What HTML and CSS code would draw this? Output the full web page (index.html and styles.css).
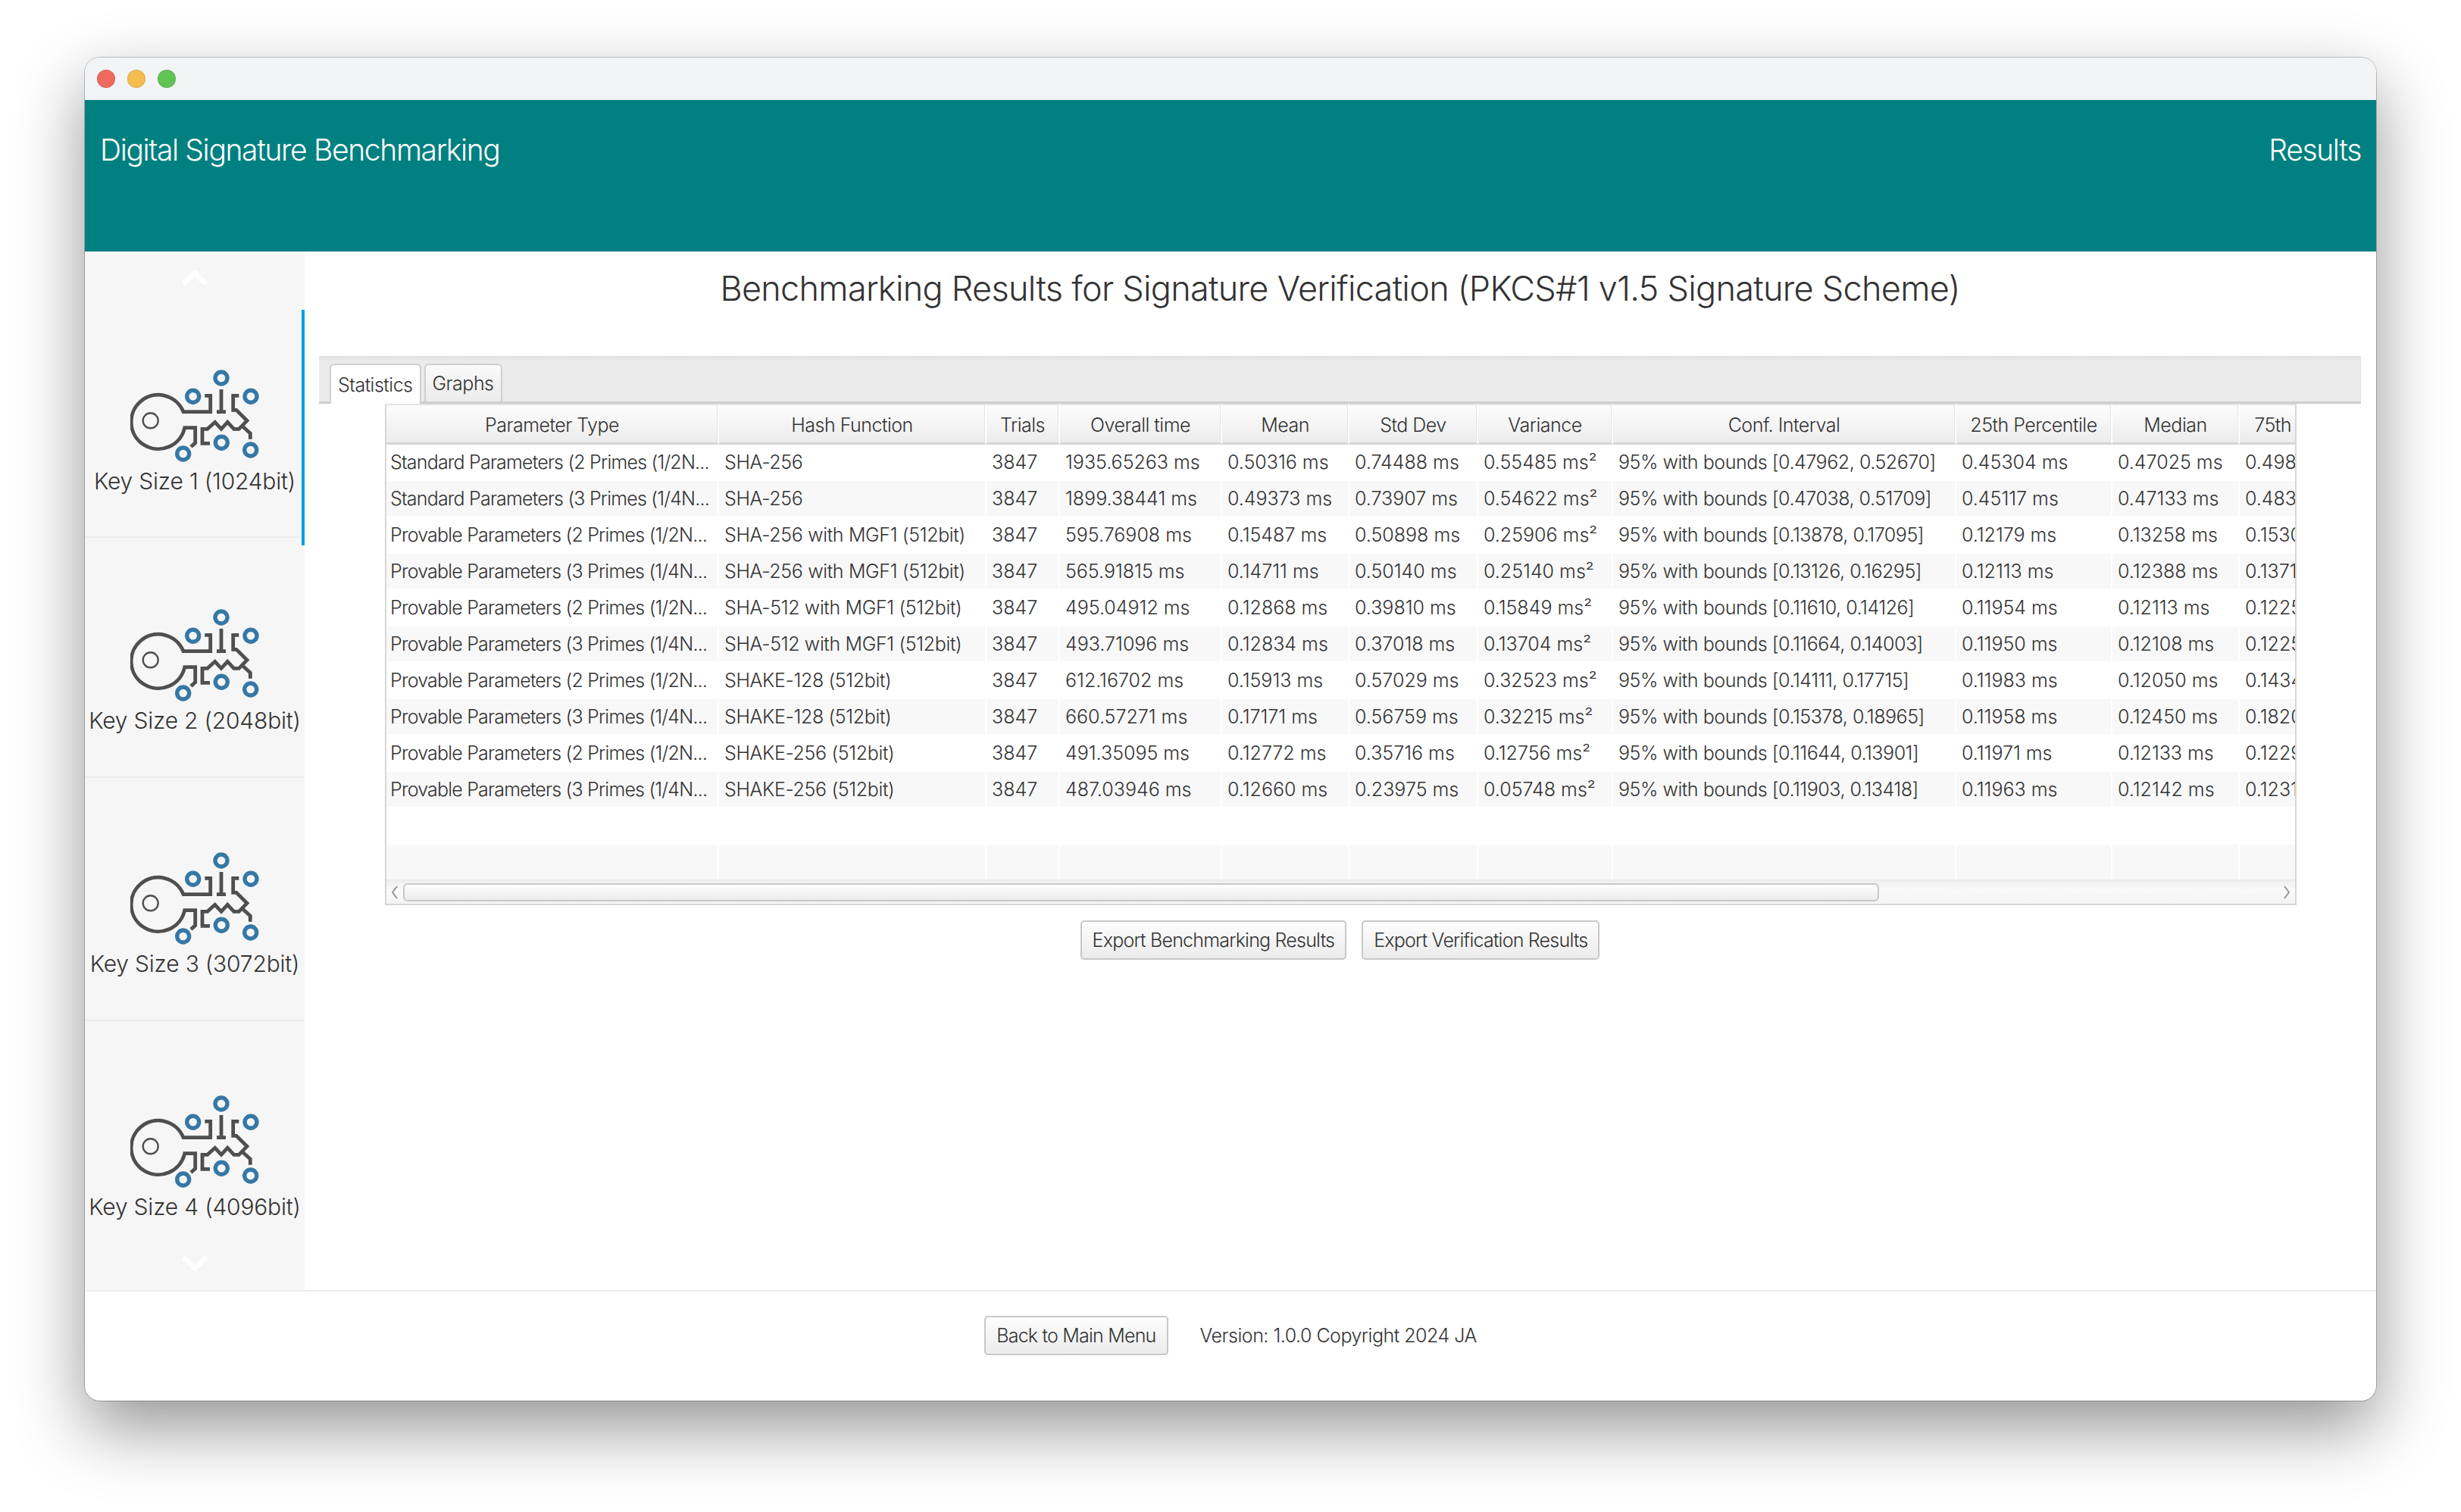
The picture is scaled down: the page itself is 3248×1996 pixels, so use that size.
FILE: index.html
```html
<!DOCTYPE html>
<html lang="en">
  <head>
    <meta charset="UTF-8" />
    <title>Digital Signature Benchmarking</title>
    <link rel="stylesheet" href="styles.css">
  </head>
  <body>
    <svg class="defs" width="0" height="0">
      <symbol id="keyIcon" viewBox="0 0 170 122">
        <g fill="none" stroke="#4f4f4f" stroke-width="4.8">
          <path d="M98.3 34.3H105.7V55.7H70A35.7 35.7 0 1 0 71.7 76.7H85.7V96.7L80 101.7" />
          <path d="M120 26V55.7M114 55.7H126" />
          <path d="M143.3 34.3H135.7V53.3H140L154 67.3L143.3 78.3H136.7L128.3 69.3L120 78.3L111.7 69.3L101.7 78.3H95V97.3H105" />
          <path d="M148.3 75L158.3 84V91.7" />
          <circle cx="26.7" cy="67.3" r="10" stroke-width="2.4" />
        </g>
        <g fill="none" stroke="#3578a6" stroke-width="5.4">
          <circle cx="120" cy="11" r="8" />
          <circle cx="82.7" cy="35.3" r="8" />
          <circle cx="159" cy="35.3" r="8" />
          <circle cx="120.3" cy="96.3" r="8" />
          <circle cx="158.7" cy="106" r="8" />
          <circle cx="69.7" cy="111" r="8" />
        </g>
      </symbol>
    </svg>

    <div class="vindue">
      <div class="titelbar">
        <span class="prik rod"></span>
        <span class="prik gul"></span>
        <span class="prik gron"></span>
      </div>

      <header class="topbar">
        <span>Digital Signature Benchmarking</span>
        <span>Results</span>
      </header>

      <div class="midte">
        <nav class="sidebar">
          <div class="valgtLinje"></div>
          <svg class="pil" viewBox="0 0 34 20"><path d="M4 16L17 4L30 16" /></svg>
          <div class="nogle nogle1">
            <svg class="nogleIkon"><use href="#keyIcon" /></svg>
            <p>Key Size 1 (1024bit)</p>
          </div>
          <div class="nogle nogle2">
            <svg class="nogleIkon"><use href="#keyIcon" /></svg>
            <p>Key Size 2 (2048bit)</p>
          </div>
          <div class="nogle nogle3">
            <svg class="nogleIkon"><use href="#keyIcon" /></svg>
            <p>Key Size 3 (3072bit)</p>
          </div>
          <div class="nogle nogle4">
            <svg class="nogleIkon"><use href="#keyIcon" /></svg>
            <p>Key Size 4 (4096bit)</p>
          </div>
          <svg class="pil pilNed" viewBox="0 0 34 20"><path d="M4 4L17 16L30 4" /></svg>
        </nav>

        <main class="indhold">
          <h1>Benchmarking Results for Signature Verification (PKCS#1 v1.5 Signature Scheme)</h1>

          <div class="faner">
            <button class="fane valgt">Statistics</button>
            <button class="fane">Graphs</button>
          </div>

          <section class="tabelBoks">
            <div class="tabelKlip">
              <table>
                <colgroup>
                  <col class="k1" /><col class="k2" /><col class="k3" /><col class="k4" />
                  <col class="k5" /><col class="k6" /><col class="k7" /><col class="k8" />
                  <col class="k9" /><col class="k10" /><col class="k11" />
                </colgroup>
                <thead>
                  <tr>
                    <th>Parameter Type</th><th>Hash Function</th><th>Trials</th><th>Overall time</th>
                    <th>Mean</th><th>Std Dev</th><th>Variance</th><th>Conf. Interval</th>
                    <th>25th Percentile</th><th>Median</th><th>75th Percentile</th>
                  </tr>
                </thead>
                <tbody>
                  <tr><td>Standard Parameters (2 Primes (1/2N...</td><td>SHA-256</td><td>3847</td><td>1935.65263 ms</td><td>0.50316 ms</td><td>0.74488 ms</td><td>0.55485 ms²</td><td>95% with bounds [0.47962, 0.52670]</td><td>0.45304 ms</td><td>0.47025 ms</td><td>0.49820 ms</td></tr>
                  <tr><td>Standard Parameters (3 Primes (1/4N...</td><td>SHA-256</td><td>3847</td><td>1899.38441 ms</td><td>0.49373 ms</td><td>0.73907 ms</td><td>0.54622 ms²</td><td>95% with bounds [0.47038, 0.51709]</td><td>0.45117 ms</td><td>0.47133 ms</td><td>0.48310 ms</td></tr>
                  <tr><td>Provable Parameters (2 Primes (1/2N...</td><td>SHA-256 with MGF1 (512bit)</td><td>3847</td><td>595.76908 ms</td><td>0.15487 ms</td><td>0.50898 ms</td><td>0.25906 ms²</td><td>95% with bounds [0.13878, 0.17095]</td><td>0.12179 ms</td><td>0.13258 ms</td><td>0.15300 ms</td></tr>
                  <tr><td>Provable Parameters (3 Primes (1/4N...</td><td>SHA-256 with MGF1 (512bit)</td><td>3847</td><td>565.91815 ms</td><td>0.14711 ms</td><td>0.50140 ms</td><td>0.25140 ms²</td><td>95% with bounds [0.13126, 0.16295]</td><td>0.12113 ms</td><td>0.12388 ms</td><td>0.13710 ms</td></tr>
                  <tr><td>Provable Parameters (2 Primes (1/2N...</td><td>SHA-512 with MGF1 (512bit)</td><td>3847</td><td>495.04912 ms</td><td>0.12868 ms</td><td>0.39810 ms</td><td>0.15849 ms²</td><td>95% with bounds [0.11610, 0.14126]</td><td>0.11954 ms</td><td>0.12113 ms</td><td>0.12250 ms</td></tr>
                  <tr><td>Provable Parameters (3 Primes (1/4N...</td><td>SHA-512 with MGF1 (512bit)</td><td>3847</td><td>493.71096 ms</td><td>0.12834 ms</td><td>0.37018 ms</td><td>0.13704 ms²</td><td>95% with bounds [0.11664, 0.14003]</td><td>0.11950 ms</td><td>0.12108 ms</td><td>0.12250 ms</td></tr>
                  <tr><td>Provable Parameters (2 Primes (1/2N...</td><td>SHAKE-128 (512bit)</td><td>3847</td><td>612.16702 ms</td><td>0.15913 ms</td><td>0.57029 ms</td><td>0.32523 ms²</td><td>95% with bounds [0.14111, 0.17715]</td><td>0.11983 ms</td><td>0.12050 ms</td><td>0.14340 ms</td></tr>
                  <tr><td>Provable Parameters (3 Primes (1/4N...</td><td>SHAKE-128 (512bit)</td><td>3847</td><td>660.57271 ms</td><td>0.17171 ms</td><td>0.56759 ms</td><td>0.32215 ms²</td><td>95% with bounds [0.15378, 0.18965]</td><td>0.11958 ms</td><td>0.12450 ms</td><td>0.18200 ms</td></tr>
                  <tr><td>Provable Parameters (2 Primes (1/2N...</td><td>SHAKE-256 (512bit)</td><td>3847</td><td>491.35095 ms</td><td>0.12772 ms</td><td>0.35716 ms</td><td>0.12756 ms²</td><td>95% with bounds [0.11644, 0.13901]</td><td>0.11971 ms</td><td>0.12133 ms</td><td>0.12290 ms</td></tr>
                  <tr><td>Provable Parameters (3 Primes (1/4N...</td><td>SHAKE-256 (512bit)</td><td>3847</td><td>487.03946 ms</td><td>0.12660 ms</td><td>0.23975 ms</td><td>0.05748 ms²</td><td>95% with bounds [0.11903, 0.13418]</td><td>0.11963 ms</td><td>0.12142 ms</td><td>0.12310 ms</td></tr>
                  <tr><td></td><td></td><td></td><td></td><td></td><td></td><td></td><td></td><td></td><td></td><td></td></tr>
                  <tr><td></td><td></td><td></td><td></td><td></td><td></td><td></td><td></td><td></td><td></td><td></td></tr>
                </tbody>
              </table>
            </div>
            <div class="scrollbar">
              <svg class="scrollPil" viewBox="0 0 10 20"><path d="M8 2L2 10L8 18" /></svg>
              <div class="spor"><div class="greb"></div></div>
              <svg class="scrollPil" viewBox="0 0 10 20"><path d="M2 2L8 10L2 18" /></svg>
            </div>
          </section>

          <div class="knapper">
            <button class="knap">Export Benchmarking Results</button>
            <button class="knap">Export Verification Results</button>
          </div>
        </main>
      </div>

      <footer class="bund">
        <button class="knap">Back to Main Menu</button>
        <span>Version: 1.0.0 Copyright 2024 JA</span>
      </footer>
    </div>
  </body>
</html>
```

FILE: styles.css
```css
html,
body {
  margin: 0;
  padding: 0;
  height: 1996px;
  overflow: hidden;
  background: #fff;
}

body {
  font-family: "Inter", "Liberation Sans", sans-serif;
  color: #333;
  padding: 76px 112px 0;
  box-sizing: border-box;
}

.defs {
  position: absolute;
}

.vindue {
  height: 1773px;
  display: flex;
  flex-direction: column;
  background: #fff;
  border-radius: 20px;
  overflow: hidden;
  box-shadow: 0 0 0 1px rgba(0, 0, 0, 0.22), 0 36px 90px rgba(0, 0, 0, 0.42);
}

.titelbar {
  height: 56px;
  flex: none;
  display: flex;
  align-items: center;
  gap: 16px;
  padding-left: 16px;
  background: #f3f4f6;
}

.prik {
  width: 24px;
  height: 24px;
  border-radius: 50%;
  box-sizing: border-box;
  border: 1px solid rgba(0, 0, 0, 0.1);
}
.rod {
  background: #ee6a5f;
}
.gul {
  background: #f5bd4f;
}
.gron {
  background: #61c454;
}

.topbar {
  height: 200px;
  flex: none;
  display: flex;
  justify-content: space-between;
  padding: 42px 20px 0 20px;
  box-sizing: border-box;
  background: #008080;
  color: #fff;
  font-size: 39px;
  font-weight: 300;
  line-height: 48px;
  letter-spacing: -1.35px;
}

.midte {
  flex: 1;
  display: flex;
  min-height: 0;
}

.sidebar {
  position: relative;
  width: 290px;
  flex: none;
  background: #f6f6f6;
  padding-top: 20px;
  box-sizing: border-box;
}

.valgtLinje {
  position: absolute;
  right: 0;
  top: 77px;
  width: 4px;
  height: 311px;
  background: #00a0dc;
}

.pil {
  display: block;
  width: 34px;
  height: 20px;
  margin: 5px auto 0;
  fill: none;
  stroke: #fff;
  stroke-width: 7;
  stroke-linecap: round;
}

.pilNed {
  margin-top: 0;
}

.nogle {
  text-align: center;
  border-bottom: 2px solid #ececec;
  box-sizing: border-box;
}

.nogle1 {
  height: 333px;
  padding-top: 111px;
}
.nogle2 {
  height: 317px;
  padding-top: 94px;
}
.nogle3 {
  height: 321px;
  padding-top: 98px;
}
.nogle4 {
  height: 310px;
  padding-top: 98px;
  border-bottom: 0;
}

.nogleIkon {
  display: block;
  width: 170px;
  height: 122px;
  margin: 0 auto;
}

.nogle p {
  margin: 7px 0 0;
  font-size: 30px;
  line-height: 36px;
  font-weight: 300;
  white-space: nowrap;
  letter-spacing: -0.2px;
}

.indhold {
  flex: 1;
  min-width: 0;
  padding: 0 20px 0 19px;
}

h1 {
  margin: 0;
  height: 138px;
  padding-top: 24px;
  box-sizing: border-box;
  text-align: center;
  font-size: 45px;
  line-height: 50px;
  font-weight: 300;
  letter-spacing: -0.7px;
}

.faner {
  height: 63px;
  display: flex;
  align-items: flex-end;
  gap: 4px;
  padding-left: 14px;
  box-sizing: border-box;
  background: linear-gradient(#e2e2e2, #ebebeb 12%);
  border-bottom: 3px solid #cfcfcf;
  border-right: 1px solid #e2e2e2;
}

.fane {
  height: 50px;
  padding: 0 9px;
  font: 300 25px "Inter", sans-serif;
  letter-spacing: -0.5px;
  color: #333;
  border: 2px solid #cfcfcf;
  border-bottom: 0;
  border-radius: 6px 6px 0 0;
  background: linear-gradient(#fafafa, #ececec);
}

.fane.valgt {
  background: #fff;
  height: 53px;
  margin-bottom: -3px;
}

.tabelBoks {
  margin: 0 85px 0 87px;
  border: 2px solid #d6d6d6;
  border-top: 0;
  height: 662px;
  display: flex;
  flex-direction: column;
  box-sizing: border-box;
  background: #fff;
}

.tabelKlip {
  flex: 1;
  min-height: 0;
  overflow: hidden;
}

table {
  width: 2652px;
  table-layout: fixed;
  border-collapse: separate;
  border-spacing: 0;
  font-size: 25px;
  font-weight: 300;
  letter-spacing: -0.5px;
}

.k1 { width: 439px; }
.k2 { width: 353px; }
.k3 { width: 97px; }
.k4 { width: 214px; }
.k5 { width: 168px; }
.k6 { width: 170px; }
.k7 { width: 178px; }
.k8 { width: 453px; }
.k9 { width: 206px; }
.k10 { width: 168px; }
.k11 { width: 206px; }

th {
  height: 54px;
  padding: 2px 0 0;
  box-sizing: border-box;
  font-weight: 300;
  background: linear-gradient(#fdfdfd, #ececec);
  border-right: 2px solid #fff;
  border-bottom: 3px solid #d6d6d6;
  border-top: 2px solid #e2e2e2;
  box-shadow: inset -1px 0 0 #e4e4e4;
  white-space: nowrap;
  overflow: hidden;
}

td {
  height: 48px;
  padding: 0 0 0 7px;
  box-sizing: border-box;
  border-right: 2px solid #fff;
  border-bottom: 2px solid #fff;
  white-space: nowrap;
  overflow: hidden;
  letter-spacing: 0;
}

td:nth-child(1) {
  padding-left: 5px;
  letter-spacing: -0.8px;
}

td:nth-child(2) {
  letter-spacing: -0.35px;
}

td:nth-child(8) {
  letter-spacing: -0.45px;
}

tbody tr:nth-child(even) td {
  background: #f8f8f8;
}

.scrollbar {
  height: 30px;
  flex: none;
  display: flex;
  align-items: center;
  background: linear-gradient(#f0f0f0, #fafafa 40%, #f4f4f4);
  border-top: 2px solid #ececec;
}

.scrollPil {
  width: 10px;
  height: 20px;
  flex: none;
  margin: 0 6px;
  fill: none;
  stroke: #888;
  stroke-width: 1.6;
}

.spor {
  flex: 1;
  height: 24px;
}

.greb {
  width: 1948px;
  height: 24px;
  box-sizing: border-box;
  border: 2px solid #c8c8c8;
  border-radius: 6px;
  background: linear-gradient(#fdfdfd, #ececec);
}

.knapper {
  display: flex;
  justify-content: center;
  gap: 20px;
  margin-top: 20px;
}

.knap {
  height: 52px;
  padding: 0 14px;
  font: 300 25px "Inter", sans-serif;
  letter-spacing: -0.78px;
  color: #333;
  border: 2px solid #c8c8c8;
  border-radius: 5px;
  background: linear-gradient(#fdfdfd, #ececec);
  white-space: nowrap;
}

.bund {
  height: 146px;
  flex: none;
  display: flex;
  align-items: center;
  justify-content: center;
  gap: 42px;
  padding-bottom: 28px;
  box-sizing: border-box;
  border-top: 2px solid #ececec;
  font-size: 25px;
  font-weight: 300;
  letter-spacing: -0.5px;
}
```
